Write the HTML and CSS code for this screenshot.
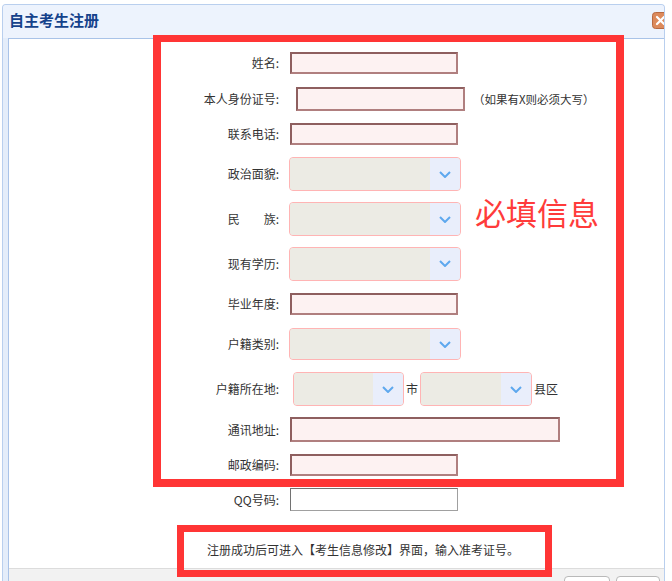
FILE: index.html
```html
<!DOCTYPE html>
<html lang="zh">
<head>
<meta charset="utf-8">
<title>自主考生注册</title>
<link rel="stylesheet" href="styles.css">
</head>
<body>
<div class="window">
  <div class="header">
    <span class="title">自主考生注册</span>
    <span class="close">
      <svg width="17" height="17" viewBox="0 0 17 17">
        <rect x="0.5" y="0.5" width="16" height="16" rx="3" fill="#dc8a5c" stroke="#b86a42"/>
        <path d="M5 5 L12 12 M12 5 L5 12" stroke="#fff" stroke-width="2.2" stroke-linecap="round"/>
      </svg>
    </span>
  </div>
  <div class="frame">
    <div class="content">
      <form class="form">
        <div class="row h36"><span class="lbl">姓名:</span><input class="txt w168 ml11"></div>
        <div class="row h36"><span class="lbl">本人身份证号:</span><input class="txt w169 tall ml17"><span class="hint">（如果有X则必须大写）</span></div>
        <div class="row h34"><span class="lbl">联系电话:</span><input class="txt w168 ml11"></div>
        <div class="row h46"><span class="lbl">政治面貌:</span>
          <div class="sel w172 ml10"><span class="sel-field"></span><span class="sel-arrow"><svg width="12" height="7" viewBox="0 0 12 7"><polyline points="1,1 6,6 11,1" fill="none" stroke="#5ea8ee" stroke-width="2"/></svg></span></div>
        </div>
        <div class="row h44"><span class="lbl">民　　族:</span>
          <div class="sel w172 ml10"><span class="sel-field"></span><span class="sel-arrow"><svg width="12" height="7" viewBox="0 0 12 7"><polyline points="1,1 6,6 11,1" fill="none" stroke="#5ea8ee" stroke-width="2"/></svg></span></div>
        </div>
        <div class="row h45"><span class="lbl">现有学历:</span>
          <div class="sel w172 ml10"><span class="sel-field"></span><span class="sel-arrow"><svg width="12" height="7" viewBox="0 0 12 7"><polyline points="1,1 6,6 11,1" fill="none" stroke="#5ea8ee" stroke-width="2"/></svg></span></div>
        </div>
        <div class="row h36"><span class="lbl">毕业年度:</span><input class="txt w168 ml11"></div>
        <div class="row h44"><span class="lbl">户籍类别:</span>
          <div class="sel w172 short ml10"><span class="sel-field"></span><span class="sel-arrow"><svg width="12" height="7" viewBox="0 0 12 7"><polyline points="1,1 6,6 11,1" fill="none" stroke="#5ea8ee" stroke-width="2"/></svg></span></div>
        </div>
        <div class="row h46"><span class="lbl">户籍所在地:</span>
          <div class="sel w111 ml14"><span class="sel-field"></span><span class="sel-arrow"><svg width="12" height="7" viewBox="0 0 12 7"><polyline points="1,1 6,6 11,1" fill="none" stroke="#5ea8ee" stroke-width="2"/></svg></span></div>
          <span class="unit">市</span>
          <div class="sel w112 ml2"><span class="sel-field"></span><span class="sel-arrow"><svg width="12" height="7" viewBox="0 0 12 7"><polyline points="1,1 6,6 11,1" fill="none" stroke="#5ea8ee" stroke-width="2"/></svg></span></div>
          <span class="unit">县区</span>
        </div>
        <div class="row h35"><span class="lbl">通讯地址:</span><input class="txt w270 addr ml11"></div>
        <div class="row h35"><span class="lbl">邮政编码:</span><input class="txt w168 ml11"></div>
        <div class="row h35"><span class="lbl">QQ号码:</span><input class="txt plain w168 ml11"></div>
      </form>
      <p class="note">注册成功后可进入【考生信息修改】界面，输入准考证号。</p>
    </div>
    <div class="footer">
      <button class="btn b1" type="button"></button>
      <button class="btn b2" type="button"></button>
    </div>
  </div>
</div>
<div class="mark mark-main"></div>
<div class="mark-label">必填信息</div>
<div class="mark mark-note"></div>
</body>
</html>
```
FILE: styles.css
```css
html, body {
  margin: 0;
  padding: 0;
}
body {
  width: 672px;
  height: 581px;
  overflow: hidden;
  position: relative;
  background: #fff;
  font-family: "Noto Sans CJK SC", "Liberation Sans", sans-serif;
  font-size: 12px;
  color: #333;
}
.window {
  margin: 4px 0 0 2px;
  width: 663px;
  height: 577px;
  box-sizing: border-box;
  border: 1px solid #b9cfee;
  border-bottom: none;
  border-radius: 4px 4px 0 0;
  background: #e4edfa;
  overflow: hidden;
}
.header {
  height: 33px;
  box-sizing: border-box;
  padding: 0 0 3px 6px;
  display: flex;
  align-items: center;
  justify-content: space-between;
  overflow: hidden;
  background: #edf3fd;
}
.title {
  font-weight: bold;
  font-size: 15px;
  line-height: 18px;
  color: #15428b;
}
.close {
  display: block;
  width: 17px;
  height: 17px;
  margin-right: -5px;
}
.close svg {
  display: block;
}
.frame {
  margin-left: 5px;
  border-left: 1px solid #a9c3e8;
  border-top: 1px solid #a9c3e8;
  background: #fff;
}
.content {
  height: 529px;
  box-sizing: border-box;
  padding-top: 6px;
  overflow: hidden;
}
.form {
  margin: 0;
}
.row {
  display: flex;
  align-items: center;
}
.h34 { height: 34px; }
.h35 { height: 35px; }
.h36 { height: 36px; }
.h44 { height: 44px; }
.h45 { height: 45px; }
.h46 { height: 46px; }
.lbl {
  width: 270px;
  flex: none;
  text-align: right;
  line-height: 16px;
  color: #333;
}
.txt {
  display: block;
  margin: 0;
  padding: 0;
  height: 22px;
  box-sizing: border-box;
  border: 2px solid #b07f7f;
  border-top-color: #8e5f5f;
  border-left-color: #8e5f5f;
  background: #fdf2f2;
  font: inherit;
  outline: none;
}
.txt.tall { height: 24px; }
.txt.addr { height: 25px; }
.txt.plain {
  height: 23px;
  border: 1px solid #a0a0a0;
  border-top-color: #727272;
  border-left-color: #727272;
  background: #fff;
}
.w168 { width: 168px; }
.w169 { width: 169px; }
.w270 { width: 270px; }
.w172 { width: 172px; }
.w111 { width: 111px; }
.w112 { width: 112px; }
.ml2 { margin-left: 2px; }
.ml10 { margin-left: 10px; }
.ml11 { margin-left: 11px; }
.ml14 { margin-left: 14px; }
.ml17 { margin-left: 17px; }
.hint {
  margin-left: 8px;
  font-size: 11.5px;
  line-height: 16px;
  color: #333;
}
.sel {
  display: flex;
  height: 34px;
  box-sizing: border-box;
  border: 1px solid #ffb4b4;
  border-radius: 4px;
  overflow: hidden;
  background: #ecebe4;
}
.sel.short { height: 32px; }
.sel-field {
  flex: 1;
  background: #ecebe4;
}
.sel-arrow {
  width: 30px;
  flex: none;
  display: flex;
  align-items: center;
  justify-content: center;
  background: #e9eefb;
}
.sel-arrow svg {
  display: block;
}
.unit {
  margin-left: 2px;
  line-height: 16px;
  color: #333;
}
.note {
  margin: 23px 0 0;
  padding-left: 198px;
  font-size: 12px;
  line-height: 20px;
  color: #333;
}
.footer {
  height: 13px;
  box-sizing: border-box;
  border-top: 1px solid #dcdcdc;
  background: #f2f2f2;
  display: flex;
  justify-content: flex-end;
  align-items: flex-start;
  gap: 6px;
  padding: 7px 4px 0 0;
  overflow: hidden;
}
.btn {
  display: block;
  flex: none;
  height: 26px;
  margin: 0;
  padding: 0;
  border: 1px solid #b9b9b9;
  border-radius: 4px;
  background: #fff;
}
.b1 { width: 46px; }
.b2 { width: 44px; }
.mark {
  position: absolute;
  box-sizing: border-box;
  border: 8px solid #ff3535;
  pointer-events: none;
}
.mark-main {
  left: 153px;
  top: 35px;
  width: 471px;
  height: 452px;
  border-top-width: 7px;
}
.mark-note {
  left: 177px;
  top: 525px;
  width: 375px;
  height: 52px;
  border-width: 7px;
}
.mark-label {
  position: absolute;
  left: 475px;
  top: 196px;
  font-size: 31px;
  line-height: 31px;
  color: #ff3b3b;
  white-space: nowrap;
}
```
